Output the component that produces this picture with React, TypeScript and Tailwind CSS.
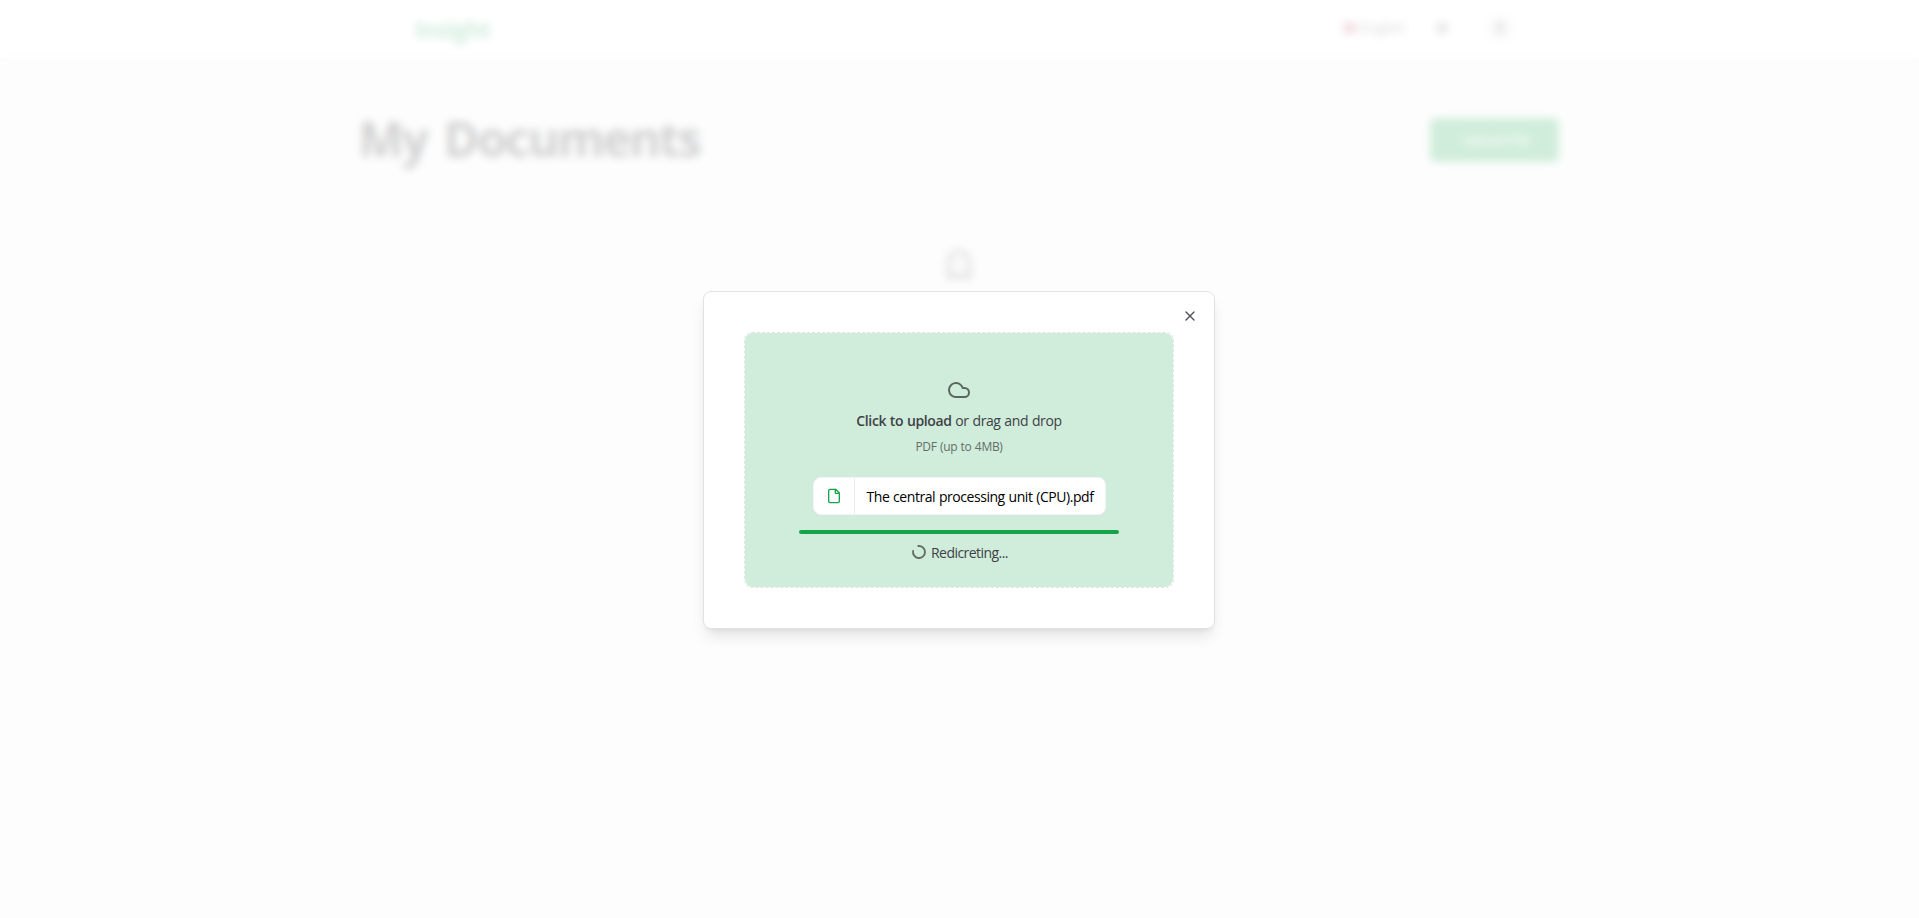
import { Cloud, Ghost, Sun, User, X } from "lucide-react";

function Navbar() {
  return (
    <nav className="h-[60px] w-full shrink-0 border-b-2 border-zinc-200 bg-white">
      <div className="mx-auto flex h-[57px] w-[1100px] items-center justify-between pl-[5px]">
        <span className="pt-0.5 text-[23px] font-bold tracking-[-0.5px] text-[#16a34a]">Insight</span>
        <div className="-mr-[6px] flex items-center pb-0.5">
          <div className="flex items-center gap-1 text-sm text-zinc-700">
            <span className="h-3 w-3.5 bg-[#c46a80]" />
            <span className="tracking-[-0.3px]">English</span>
          </div>
          <Sun className="ml-[28px] h-4 w-4 text-zinc-900" strokeWidth={2.5} />
          <div className="ml-[34px] flex h-8 w-8 items-center justify-center rounded-full bg-zinc-100">
            <User className="h-4 w-4 text-zinc-900" strokeWidth={2.5} />
          </div>
        </div>
      </div>
    </nav>
  );
}

function Documents() {
  return (
    <main className="mx-auto w-[1200px]">
      <div className="flex items-start justify-between pt-[49px]">
        <h1 className="-ml-px h-[60px] text-[48px] leading-[60px] font-bold tracking-[-1.9px] [word-spacing:6px] whitespace-nowrap text-zinc-900">My Documents</h1>
        <button className="mt-[9px] mr-px h-11 w-[129px] rounded-md bg-[#16a34a] pl-1 text-sm font-medium tracking-[-0.4px] text-white">Upload File</button>
      </div>
      <div className="flex justify-center pt-[80px] pr-px">
        <Ghost className="h-8 w-8 text-zinc-800" />
      </div>
    </main>
  );
}

function FileIcon() {
  return (
    <svg viewBox="0 0 24 24" className="h-4 w-4 text-[#16a34a]" fill="none" stroke="currentColor" strokeWidth="2" strokeLinecap="round" strokeLinejoin="round">
      <path d="M14.5 2H6a2 2 0 0 0-2 2v16a2 2 0 0 0 2 2h12a2 2 0 0 0 2-2V7.5L14.5 2z" />
      <polyline points="14 2 14 8 20 8" />
    </svg>
  );
}

function Spinner() {
  return (
    <svg viewBox="0 0 24 24" className="-mt-0.5 h-4 w-4 -rotate-[97deg] text-[#626f67]" fill="none" stroke="currentColor" strokeWidth="2.8" strokeLinecap="round">
      <path d="M21 12a9 9 0 1 1-6.219-8.56" />
    </svg>
  );
}

function UploadDialog() {
  return (
    <div role="dialog" className="relative mt-px h-[338px] w-[512px] rounded-lg border border-[#e2e2e4] bg-white p-10 shadow-lg">
      <button aria-label="Close" className="absolute top-4 right-4 text-zinc-600">
        <X className="h-4 w-4" />
      </button>
      <div className="h-64 rounded-lg border border-dashed border-zinc-200">
        <div className="flex h-full flex-col items-center rounded-lg bg-[#d0eddb] pt-[45px]">
          <Cloud className="h-6 w-6 text-[#5b6660]" />
          <p className="mt-[9px] text-sm leading-5 tracking-[-0.38px] [word-spacing:0.5px] text-zinc-700">
            <span className="font-semibold">Click to upload</span> or drag and drop
          </p>
          <p className="mt-2 text-xs leading-4 tracking-[-0.3px] [word-spacing:0.5px] text-[#646d68]">PDF (up to 4MB)</p>
          <div className="mt-[22px] flex h-[38px] w-[293px] items-stretch rounded-lg border border-zinc-100 bg-white">
            <div className="flex w-[41px] shrink-0 items-center justify-center border-r border-zinc-200/70">
              <FileIcon />
            </div>
            <p className="flex items-center pt-0.5 pl-3 text-sm tracking-[-0.45px] [word-spacing:0.6px] whitespace-nowrap text-black">The central processing unit (CPU).pdf</p>
          </div>
          <div className="mt-[15px] h-1 w-80 rounded-full bg-[#16a34a]" />
          <div className="mt-[9px] flex items-center gap-1 pl-px text-sm leading-5 tracking-[-0.55px] text-zinc-700">
            <Spinner />
            <span>Redicreting...</span>
          </div>
        </div>
      </div>
    </div>
  );
}

export default function App() {
  return (
    <div className="relative h-[918px] w-full overflow-hidden bg-[#f5f5f5] font-['Open_Sans',sans-serif]">
      <Navbar />
      <Documents />
      <div className="absolute inset-0 flex items-center justify-center bg-white/80 pt-px pr-px backdrop-blur-[4px]">
        <UploadDialog />
      </div>
    </div>
  );
}
